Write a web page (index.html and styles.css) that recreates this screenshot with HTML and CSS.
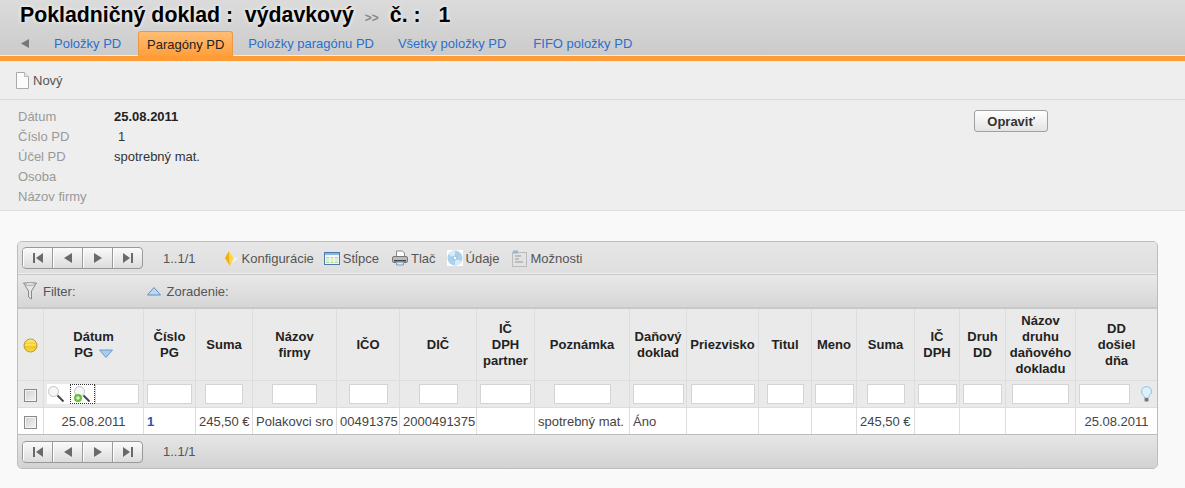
FILE: index.html
```html
<!DOCTYPE html>
<html lang="sk">
<head>
<meta charset="utf-8">
<title>Pokladničný doklad</title>
<link rel="stylesheet" href="styles.css">
</head>
<body>
<svg class="defs" width="0" height="0" aria-hidden="true">
  <defs>
    <symbol id="first" viewBox="0 0 12 12"><path d="M1 1h2v10H1zM11 1v10L4 6z"/></symbol>
    <symbol id="prev" viewBox="0 0 12 12"><path d="M10 1v10L2 6z"/></symbol>
    <symbol id="next" viewBox="0 0 12 12"><path d="M2 1v10l8-5z"/></symbol>
    <symbol id="last" viewBox="0 0 12 12"><path d="M9 1h2v10H9zM1 1v10l7-5z"/></symbol>
    <symbol id="glass" viewBox="0 0 18 18"><circle cx="6.500" cy="6.500" r="5" fill="#f4f6f8" stroke="#c4c4c4"/><path d="M10.500 10.500l6 6" stroke="#444" stroke-width="2"/></symbol>
  </defs>
</svg>
<header class="head">
  <h1 class="title">Pokladničný doklad :  výdavkový<span class="sep">&gt;&gt;</span>č. :  <span class="num">1</span></h1>
  <nav class="tabs">
    <svg class="tab-back" width="9" height="9" viewBox="0 0 9 9"><path d="M8 0v9L0 4.500z" fill="#777"/></svg>
    <a class="tab t1">Položky PD</a>
    <a class="tab active">Paragóny PD</a>
    <a class="tab t3">Položky paragónu PD</a>
    <a class="tab t4">Všetky položky PD</a>
    <a class="tab t5">FIFO položky PD</a>
  </nav>
</header>
<div class="actions">
  <svg width="13" height="17" viewBox="0 0 13 17"><path d="M.5.500h8l4 4v12H.5z" fill="#fbfbfb" stroke="#aaa"/><path d="M8.500.500v4h4" fill="#e8e8e8" stroke="#bbb"/></svg>
  <span>Nový</span>
</div>
<section class="info">
  <dl class="fields">
    <dt>Dátum</dt><dd class="strong">25.08.2011</dd>
    <dt>Číslo PD</dt><dd class="indent">1</dd>
    <dt>Účel PD</dt><dd>spotrebný mat.</dd>
    <dt>Osoba</dt><dd></dd>
    <dt>Názov firmy</dt><dd></dd>
  </dl>
  <button class="edit">Opraviť</button>
</section>
<section class="grid">
  <div class="bar bar-top">
    <div class="pager">
      <button><svg><use href="#first"/></svg></button><button><svg><use href="#prev"/></svg></button><button><svg><use href="#next"/></svg></button><button><svg><use href="#last"/></svg></button>
    </div>
    <span class="count">1..1/1</span>
    <span class="tool tool-conf"><svg width="15" height="17" viewBox="0 0 15 17"><path d="M10 6l5 3-6 4z" fill="#eef0f6"/><path d="M6 1l5 7-4 8-5-8z" fill="#ffd65c"/><path d="M6 1v7l1 8-5-8z" fill="#f5ad0a"/></svg>Konfigurácie</span>
    <span class="tool tool-col"><svg width="16" height="15" viewBox="0 0 16 15"><rect x=".5" y="1.500" width="15" height="12" fill="#f2f6fb" stroke="#4a79b0"/><rect x="1" y="2" width="14" height="2" fill="#8fb4dc"/><path d="M2 6h12v6H2z" fill="#b7dc9c"/><path d="M2 8h12M2 10h12M6 5v7M10 5v7" stroke="#fff"/></svg>Stĺpce</span>
    <span class="tool tool-print"><svg width="16" height="16" viewBox="0 0 16 16"><path d="M4.500 1h6l2 2v4h-8z" fill="#fff" stroke="#888"/><rect x=".5" y="6.500" width="15" height="6" rx="1.500" fill="#bbb" stroke="#777"/><rect x="2" y="10" width="12" height="1.500" fill="#444"/><path d="M4.500 12h7v3h-7z" fill="#d6e6f6" stroke="#7a9cc0"/></svg>Tlač</span>
    <span class="tool tool-data"><svg width="16" height="16" viewBox="0 0 16 16"><rect width="16" height="16" fill="#fff"/><circle cx="8" cy="8" r="7.500" fill="#a9d2ee"/><path d="M8 8L1 4a8 8 0 0 1 7-3.500zM8 8l7 4a8 8 0 0 1-7 3.500z" fill="#d8ecf8"/><circle cx="8" cy="8" r="2" fill="#fff" stroke="#8bb8d8"/></svg>Údaje</span>
    <span class="tool tool-opt"><svg width="15" height="17" viewBox="0 0 15 17"><rect x=".5" y="2.500" width="14" height="14" fill="#e2e2e2" stroke="#bbb"/><path d="M1 .5h5v3H1z" fill="#8fb8de"/><path d="M3 6h6M3 9h4M3 12h8" stroke="#999"/></svg>Možnosti</span>
  </div>
  <div class="bar bar-filter">
    <svg width="14" height="18" viewBox="0 0 14 18"><path d="M.5 1h13L8.500 9v8l-3-2V9z" fill="#e6e6e6" stroke="#888"/><ellipse cx="7" cy="2" rx="6" ry="1.200" fill="#fff" stroke="#999"/></svg>
    <span class="filter-label">Filter:</span>
    <svg class="sort-up" width="14" height="9" viewBox="0 0 14 9"><path d="M7 .5L13.500 8H.5z" fill="#bcd8f2" stroke="#5d8fc4"/></svg>
    <span>Zoradenie:</span>
  </div>
  <table class="data">
    <colgroup>
      <col class="c0"><col class="c1"><col class="c2"><col class="c3"><col class="c4"><col class="c5"><col class="c6"><col class="c7"><col class="c8"><col class="c9"><col class="c10"><col class="c11"><col class="c12"><col class="c13"><col class="c14"><col class="c15"><col class="c16"><col class="c17">
    </colgroup>
    <thead>
      <tr class="r-head">
        <th><svg class="dot" width="15" height="15" viewBox="0 0 15 15"><defs><linearGradient id="y" x1="0" y1="0" x2="0" y2="1"><stop offset="0" stop-color="#fff2a0"/><stop offset=".5" stop-color="#f2c200"/><stop offset="1" stop-color="#f7d860"/></linearGradient></defs><circle cx="7.500" cy="7.500" r="6.500" fill="url(#y)" stroke="#b89a30"/><path d="M2 7h11" stroke="#fff6c0"/></svg></th>
        <th>Dátum<br>PG <svg class="sort-down" width="14" height="9" viewBox="0 0 14 9"><path d="M7 8.500L13.500 1H.5z" fill="#a8cdf0" stroke="#6a9bd0"/></svg></th>
        <th>Číslo<br>PG</th>
        <th>Suma</th>
        <th>Názov<br>firmy</th>
        <th>IČO</th>
        <th>DIČ</th>
        <th>IČ<br>DPH<br>partner</th>
        <th>Poznámka</th>
        <th>Daňový<br>doklad</th>
        <th>Priezvisko</th>
        <th>Titul</th>
        <th>Meno</th>
        <th>Suma</th>
        <th>IČ<br>DPH</th>
        <th>Druh<br>DD</th>
        <th>Názov<br>druhu<br>daňového<br>dokladu</th>
        <th>DD<br>došiel<br>dňa</th>
      </tr>
      <tr class="r-filter">
        <td><input class="check" type="checkbox"></td>
        <td><div class="date-filter"><svg class="g1" width="23" height="20"><use href="#glass" x="0" y="1" width="18" height="18"/></svg><span class="g2"><svg width="18" height="18"><use href="#glass" width="18" height="18"/><circle cx="5" cy="13" r="4" fill="#6cbf3c"/><path d="M3 13h4M5 11v4" stroke="#fff"/></svg></span><input class="f fd"></div></td>
        <td><input class="f w44"></td>
        <td><input class="f w38"></td>
        <td><input class="f w45"></td>
        <td><input class="f w39"></td>
        <td><input class="f w39"></td>
        <td><input class="f w51"></td>
        <td><input class="f w57"></td>
        <td><input class="f w51"></td>
        <td><input class="f w64"></td>
        <td><input class="f w37"></td>
        <td><input class="f w39"></td>
        <td><input class="f w38"></td>
        <td><input class="f w39"></td>
        <td><input class="f w39"></td>
        <td><input class="f w57"></td>
        <td><div class="last-filter"><input class="f w51"><svg width="11" height="16" viewBox="0 0 11 16"><path d="M5.500 .5a5 5 0 0 0-3 9c.7.600 1 1.500 1 2.500h4c0-1 .3-1.900 1-2.500a5 5 0 0 0-3-9z" fill="#dff0fb" stroke="#8fc0e4"/><rect x="3.500" y="12" width="4" height="3.500" rx="1" fill="#777"/></svg></div></td>
      </tr>
    </thead>
    <tbody>
      <tr class="r-data">
        <td class="mid"><input class="check" type="checkbox"></td>
        <td class="mid">25.08.2011</td>
        <td><a class="link">1</a></td>
        <td>245,50 €</td>
        <td>Polakovci sro</td>
        <td>00491375</td>
        <td>2000491375</td>
        <td></td>
        <td>spotrebný mat.</td>
        <td>Áno</td>
        <td></td>
        <td></td>
        <td></td>
        <td>245,50 €</td>
        <td></td>
        <td></td>
        <td></td>
        <td class="mid">25.08.2011</td>
      </tr>
    </tbody>
  </table>
  <div class="bar bar-bottom">
    <div class="pager">
      <button><svg><use href="#first"/></svg></button><button><svg><use href="#prev"/></svg></button><button><svg><use href="#next"/></svg></button><button><svg><use href="#last"/></svg></button>
    </div>
    <span class="count">1..1/1</span>
  </div>
</section>
</body>
</html>
```
FILE: styles.css
```css
* { box-sizing: border-box; }
html, body { margin: 0; }
body { background: #f9f9f9; font: 13px "Liberation Sans", Arial, sans-serif; color: #444; height: 488px; overflow: hidden; }
.defs { position: absolute; }

.head { height: 61px; background: linear-gradient(#dbdbdb, #cbcbcb); border-bottom: 5px solid #ff9c35; }
.title { margin: 0; padding: 2px 0 0 20px; height: 31px; font-size: 21.300px; line-height: 26px; font-weight: bold; color: #000; white-space: pre; text-shadow: 0 0 4px #fff; }
.sep { font-size: 12px; color: #888; margin: 0 11px 0 11px; text-shadow: none; }
.num { margin-left: 6px; }
.tabs { display: flex; align-items: stretch; height: 25px; padding-left: 21px; box-shadow: inset 0 -1px 0 #eee; }
.tab-back { margin: 8px 24px 0 0; }
.tab { color: #2a6fd0; line-height: 26px; }
.t3 { margin-left: 15px; }
.t4 { margin-left: 24px; }
.t5 { margin-left: 27px; }
.active { margin-left: 17px; width: 95px; text-align: center; color: #222; background: linear-gradient(#ffbd75, #ff9f3c); border: 1px solid #eb9a43; border-bottom: 0; border-radius: 3px 3px 0 0; }

.actions { height: 39px; background: #eee; border-bottom: 1px solid #d8d8d8; display: flex; align-items: center; gap: 4px; padding: 1px 0 0 16px; color: #555; }

.info { height: 111px; background: #eee; border-bottom: 1px solid #ddd; display: flex; padding: 6px 0 0 18px; }
.fields { display: grid; grid-template-columns: 96px 860px; grid-auto-rows: 20px; margin: 0; line-height: 21px; }
dt { color: #999; }
dd { margin: 0; color: #333; }
.strong { font-weight: bold; color: #222; }
.indent { padding-left: 4px; }
.edit { height: 22px; width: 74px; margin-top: 4px; font: bold 13px "Liberation Sans", Arial, sans-serif; color: #333; background: linear-gradient(#fff, #e4e4e4); border: 1px solid #a0a0a0; border-radius: 3px; padding: 0; }

.grid { margin: 30px 0 0 17px; width: 1141px; height: 228px; border: 1px solid #bdbdbd; border-radius: 5px; background: #ddd; overflow: hidden; }
.bar { display: flex; align-items: center; color: #555; }
.bar-top { height: 33px; background: linear-gradient(#e7e7e7, #dedede); border-bottom: 1px solid #c8c8c8; padding-left: 4px; box-shadow: inset 0 -1px 0 #eee; }
.bar-filter { height: 34px; padding: 0 0 0 5px; background: linear-gradient(#e8e8e8, #d6d6d6); border-bottom: 2px solid #c8c8c8; }
.filter-label { margin: 0 71px 0 6px; }
.sort-up { margin-right: 6px; }
.bar-bottom { height: 34px; padding-left: 4px; background: linear-gradient(#e6e6e6, #d2d2d2); border-top: 1px solid #bbb; }

.pager { display: flex; width: 121px; height: 22px; border: 1px solid #999; border-radius: 4px; overflow: hidden; background: linear-gradient(#fafafa, #dcdcdc); }
.pager button { flex: 1; padding: 0; border: 0; border-right: 1px solid #999; background: none; display: flex; align-items: center; justify-content: center; box-shadow: inset 1px 0 0 #fff; }
.pager button:last-child { border-right: 0; }
.pager svg { width: 12px; height: 12px; fill: #6a6a6a; }
.count { margin-left: 20px; }
.tool { display: flex; align-items: center; gap: 3px; }
.tool-conf { margin-left: 27px; gap: 4px; }
.tool-col { margin-left: 10px; }
.tool-print { margin-left: 13px; }
.tool-data { margin-left: 11px; }
.tool-opt { margin-left: 13px; gap: 3px; }

.data { table-layout: fixed; border-collapse: separate; border-spacing: 0; width: 1139px; }
.c0 { width: 26px; } .c1 { width: 100px; } .c2 { width: 52px; } .c3 { width: 57px; } .c4 { width: 84px; } .c5 { width: 63px; }
.c6 { width: 77px; } .c7 { width: 58px; } .c8 { width: 95px; } .c9 { width: 57px; } .c10 { width: 72px; } .c11 { width: 53px; }
.c12 { width: 45px; } .c13 { width: 58px; } .c14 { width: 45px; } .c15 { width: 46px; } .c16 { width: 70px; } .c17 { width: 81px; }
th, td { border-right: 1px solid #ddd; border-bottom: 1px solid #ddd; padding: 0; }
th:last-child, td:last-child { border-right: 0; }
th { background: #eaeaea; color: #222; font-weight: bold; line-height: 16px; text-align: center; overflow: hidden; }
.r-head { height: 72px; }
.r-filter { height: 27px; }
.r-filter td { background: #eaeaea; text-align: center; }
.r-data { height: 26px; }
.r-data td { background: #fff; padding-left: 3px; color: #444; white-space: nowrap; border-bottom: 0; }
.r-data td.mid { text-align: center; padding-left: 0; }
.dot { vertical-align: middle; }
.sort-down { vertical-align: -1px; margin-left: 2px; }
.link { color: #2a56b8; font-weight: bold; }
.check { width: 13px; height: 13px; margin: 0; vertical-align: middle; appearance: none; border: 1px solid #8a8a8a; background: linear-gradient(135deg, #cfcfcf, #f4f4f4); box-shadow: inset 0 0 0 1px #f4f4f4; }
.f { height: 20px; padding: 0; margin: 0; border: 1px solid #d4d4d4; background: #fff; vertical-align: middle; }
.fd { width: 44px; }
.w37 { width: 37px; } .w38 { width: 38px; } .w39 { width: 39px; } .w44 { width: 45px; } .w45 { width: 45px; } .w51 { width: 51px; } .w57 { width: 57px; } .w64 { width: 64px; }
.date-filter { display: flex; align-items: center; padding-left: 3px; }
.g1 { background: #fff; }
.g2 { width: 25px; height: 20px; border: 1px dotted #333; background: #fff; padding: 0 0 0 2px; display: flex; align-items: center; }
.last-filter { display: flex; align-items: center; padding-left: 3px; gap: 11px; }
```
